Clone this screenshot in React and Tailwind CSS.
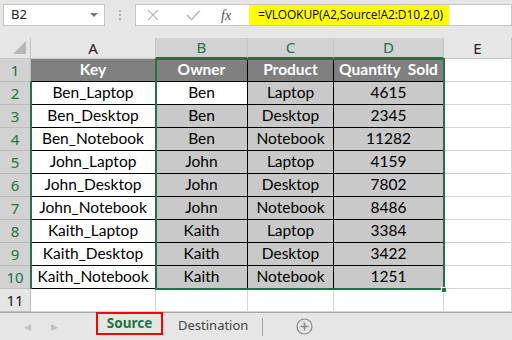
import React from 'react';

// Excel-style sheet: Source data table with formula bar and sheet tabs

const rows = [
  ['Ben_Laptop', 'Ben', 'Laptop', '4615'],
  ['Ben_Desktop', 'Ben', 'Desktop', '2345'],
  ['Ben_Notebook', 'Ben', 'Notebook', '11282'],
  ['John_Laptop', 'John', 'Laptop', '4159'],
  ['John_Desktop', 'John', 'Desktop', '7802'],
  ['John_Notebook', 'John', 'Notebook', '8486'],
  ['Kaith_Laptop', 'Kaith', 'Laptop', '3384'],
  ['Kaith_Desktop', 'Kaith', 'Desktop', '3422'],
  ['Kaith_Notebook', 'Kaith', 'Notebook', '1251'],
];

const cellFont = { fontFamily: 'Lato, "Open Sans", sans-serif' };
const uiFont = { fontFamily: '"Noto Sans", "Open Sans", sans-serif' };

function FormulaBar() {
  return (
    <div className="h-[38px] bg-[#e6e6e6] flex items-start pt-[4px] pl-[3px]" style={uiFont}>
      {/* name box */}
      <div className="w-[102px] h-[22px] bg-white border border-[#c6c6c6] flex items-center justify-between pl-[7px] pr-[6px]">
        <span className="text-[13px] text-[#222]">B2</span>
        <span className="w-0 h-0 border-l-[4px] border-r-[4px] border-t-[4px] border-l-transparent border-r-transparent border-t-[#777]"></span>
      </div>
      <div className="w-[30px] h-[22px] flex flex-col items-center justify-center gap-[2px]">
        <span className="w-[2px] h-[2px] bg-[#b0b0b0]"></span>
        <span className="w-[2px] h-[2px] bg-[#b0b0b0]"></span>
        <span className="w-[2px] h-[2px] bg-[#b0b0b0]"></span>
      </div>
      {/* formula box */}
      <div className="flex-1 h-[22px] bg-white border border-[#c6c6c6] flex items-stretch">
        <div className="w-[112px] flex items-center">
          <svg width="12" height="12" viewBox="0 0 12 12" className="ml-[11px]">
            <path d="M1 1 L11 11 M11 1 L1 11" stroke="#bdbdbd" strokeWidth="1.4" fill="none" />
          </svg>
          <svg width="15" height="12" viewBox="0 0 15 12" className="ml-[27px]">
            <path d="M1 6 L5.5 10.5 L14 1.5" stroke="#bdbdbd" strokeWidth="1.6" fill="none" />
          </svg>
          <span className="ml-[20px] text-[14px] italic text-[#555]" style={{ fontFamily: '"Liberation Serif", serif' }}>fx</span>
        </div>
        <div className="w-[200px] bg-[#ffff00] flex items-center pl-[9px] ml-[1px]">
          <span className="text-[12px] text-[#111] whitespace-nowrap tracking-[-0.15px]">=VLOOKUP(A2,Source!A2:D10,2,0)</span>
        </div>
      </div>
    </div>
  );
}

function ColHeader({ label, w, sel }) {
  return (
    <div
      className={`h-[21px] flex items-center justify-center border-r border-[#c6c6c6] text-[15px] ${
        sel ? 'bg-[#d2d2d2] text-[#217346] border-b-2 border-b-[#217346]' : 'text-[#222] border-b border-b-[#c6c6c6]'
      }`}
      style={{ width: w, ...uiFont }}
    >
      {label}
    </div>
  );
}

function RowHead({ n, sel }) {
  return (
    <div
      className={`w-[31px] h-[23px] flex items-center justify-center border-r border-b border-[#bcbcbc] text-[15px] ${
        sel ? 'bg-[#d2d2d2] text-[#217346]' : 'bg-[#e6e6e6] text-[#222]'
      }`}
      style={uiFont}
    >
      {n}
    </div>
  );
}

function Cell({ w, children, bg = 'bg-white', dark }) {
  return (
    <div
      className={`h-[23px] flex items-center justify-center border-r border-b border-black text-[15.5px] whitespace-nowrap ${bg} ${
        dark ? 'text-white font-bold' : 'text-black'
      }`}
      style={{ width: w, ...cellFont }}
    >
      {children}
    </div>
  );
}

function Blank({ w }) {
  return <div className="h-[23px] border-r border-b border-[#d4d4d4] bg-white" style={{ width: w }}></div>;
}

export default function App() {
  const widths = [125, 92, 86, 110];
  return (
    <div className="w-[512px] h-[340px] bg-white flex flex-col overflow-hidden relative">
      <FormulaBar />

      {/* column headers */}
      <div className="flex bg-[#e6e6e6]">
        <div className="w-[31px] h-[21px] border-r border-b border-[#c6c6c6] flex items-end justify-end pr-[4px] pb-[4px]">
          <svg width="13" height="13" viewBox="0 0 13 13">
            <path d="M13 0 L13 13 L0 13 Z" fill="#b7b7b7" />
          </svg>
        </div>
        <ColHeader label="A" w={125} />
        <ColHeader label="B" w={92} sel />
        <ColHeader label="C" w={86} sel />
        <ColHeader label="D" w={110} sel />
        <ColHeader label="E" w={68} />
      </div>

      {/* row 1 - table headings */}
      <div className="flex">
        <RowHead n={1} sel />
        <Cell w={125} bg="bg-[#808080]" dark>Key</Cell>
        <Cell w={92} bg="bg-[#808080]" dark>Owner</Cell>
        <Cell w={86} bg="bg-[#808080]" dark>Product</Cell>
        <Cell w={110} bg="bg-[#808080]" dark>Quantity&nbsp; Sold</Cell>
        <Blank w={68} />
      </div>

      {rows.map((r, i) => (
        <div className="flex" key={r[0]}>
          <RowHead n={i + 2} sel />
          {r.map((v, j) => (
            <Cell key={j} w={widths[j]} bg={j === 0 || (i === 0 && j === 1) ? 'bg-white' : 'bg-[#c9c9c9]'}>
              {v}
            </Cell>
          ))}
          <Blank w={68} />
        </div>
      ))}

      <div className="flex">
        <RowHead n={11} />
        {widths.map((w, j) => (
          <Blank key={j} w={w} />
        ))}
        <Blank w={68} />
      </div>

      {/* selection outlines */}
      <div className="absolute left-[155px] top-[58px] w-[290px] h-[232px] border-2 border-[#217346] pointer-events-none"></div>
      <div className="absolute left-[441px] top-[287px] w-[6px] h-[6px] bg-[#217346] border border-white"></div>
      <div className="absolute left-[30px] top-[81px] w-[2px] h-[208px] bg-[#217346]"></div>

      {/* sheet tabs */}
      <div className="flex-1 bg-[#e6e6e6] border-t border-[#a6a6a6] flex items-center" style={uiFont}>
        <span className="ml-[24px] text-[9px] text-[#c0c0c0]">◀</span>
        <span className="ml-[20px] text-[9px] text-[#c0c0c0]">▶</span>
        <div className="ml-[38px] w-[67px] h-[23px] border-2 border-[#ff0000] flex items-center justify-center -mt-[6px]">
          <span className="text-[13.5px] font-bold text-[#217346]">Source</span>
        </div>
        <span className="ml-[15px] text-[13px] text-[#444] -mt-[1px]">Destination</span>
        <span className="ml-[14px] w-px h-[18px] bg-[#a6a6a6]"></span>
        <svg width="17" height="17" viewBox="0 0 17 17" className="ml-[33px]">
          <circle cx="8.5" cy="8.5" r="7.5" fill="none" stroke="#8a8a8a" strokeWidth="1.2" />
          <path d="M8.5 4.5 V12.5 M4.5 8.5 H12.5" stroke="#8a8a8a" strokeWidth="1.6" />
        </svg>
      </div>
    </div>
  );
}
